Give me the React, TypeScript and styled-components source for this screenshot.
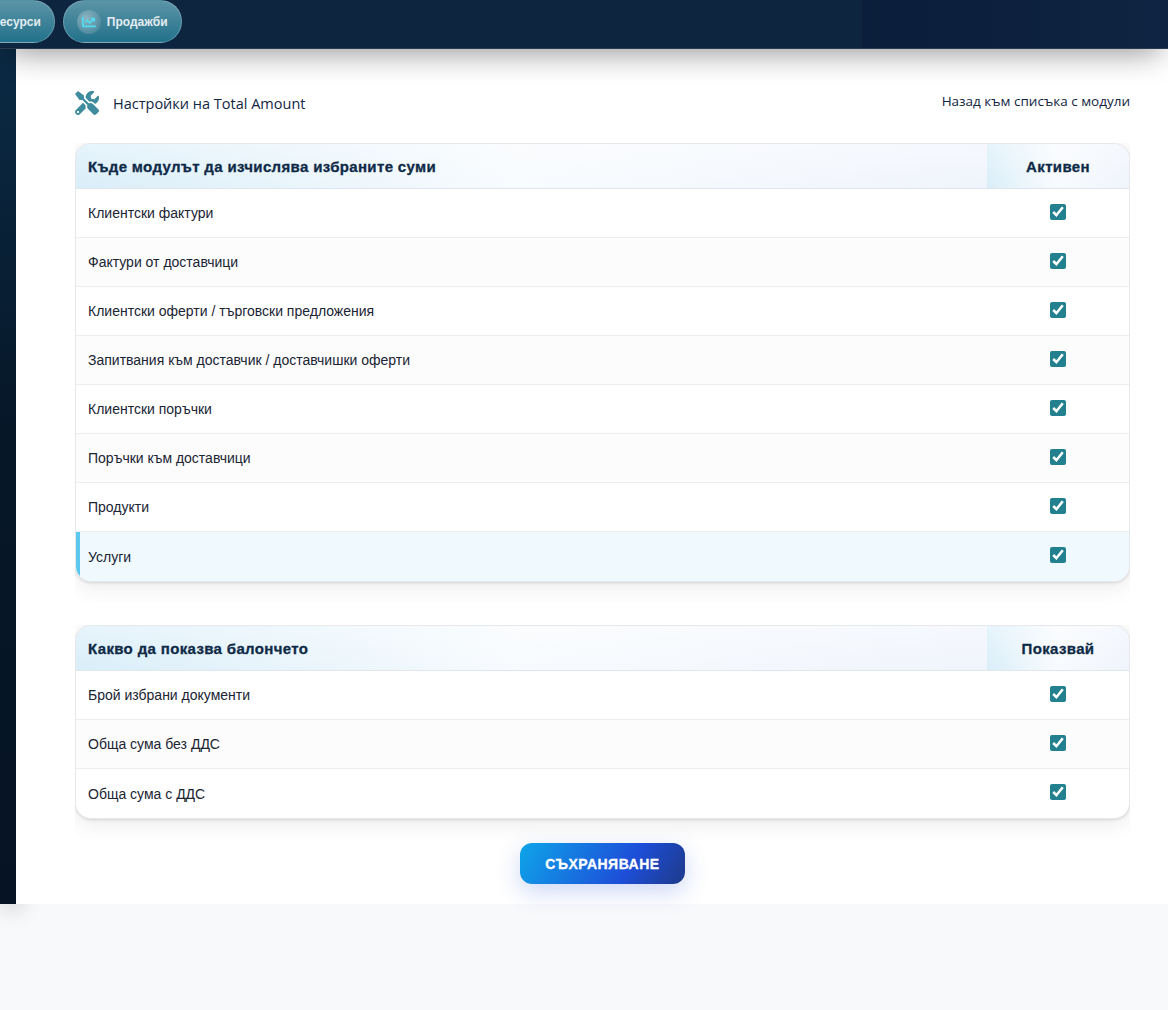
import styled, { createGlobalStyle } from "styled-components";
import { FaChartLine, FaTools, FaBoxes } from "react-icons/fa";

const GlobalStyle = createGlobalStyle`
  html, body {
    margin: 0;
    padding: 0;
    background: #f8f9fb;
    font-family: "Liberation Sans", Arial, sans-serif;
  }
  * { box-sizing: border-box; }
`;

const Page = styled.div`
  position: relative;
  width: 1168px;
  height: 1010px;
  overflow: hidden;
  background: #f8f9fb;
`;

const TopBar = styled.header`
  position: relative;
  z-index: 3;
  display: flex;
  height: 49px;
  background: #0e2540;
  border-bottom: 1px solid #2a3a4f;
  box-shadow: 0 12px 30px -8px rgba(0, 0, 0, 0.42);
`;

const Nav = styled.nav`
  flex: 1;
  display: flex;
  gap: 8px;
  margin-left: -52px;
  padding-top: 0;
  min-width: 0;
`;

const TopRight = styled.div`
  width: 306px;
  background: linear-gradient(90deg, #0b1e3a, #0e2442);
`;

const Pill = styled.a`
  display: flex;
  align-items: center;
  gap: 6px;
  height: 43px;
  padding: 0 13px;
  border-radius: 22px;
  border: 1px solid rgba(255, 255, 255, 0.22);
  background: linear-gradient(180deg, #5c94a7 0%, #3c8197 55%, #21728b 100%);
  color: #e3edf1;
  font-size: 12px;
  font-weight: 700;
  white-space: nowrap;
`;

const Ball = styled.span`
  display: flex;
  align-items: center;
  justify-content: center;
  width: 24px;
  height: 24px;
  border-radius: 50%;
  background: radial-gradient(circle at 40% 35%, #8fb4c2, #4d8a9e 75%);
  color: #4fdcf2;
  font-size: 14px;
`;

const Body = styled.div`
  display: flex;
  height: 855px;
`;

const Sidebar = styled.aside`
  position: relative;
  z-index: 1;
  width: 16px;
  background: linear-gradient(180deg, #0b2a44 0%, #061728 45%, #061324 100%);
  box-shadow: 4px 6px 22px rgba(0, 0, 0, 0.2);
`;

const Main = styled.main`
  position: relative;
  z-index: 2;
  flex: 1;
  background: #fff;
  padding: 41px 38px 0 59px;
`;

const TitleRow = styled.div`
  display: flex;
  align-items: center;
  justify-content: space-between;
  height: 26px;
  margin-bottom: 27px;
`;

const Title = styled.div`
  display: flex;
  align-items: center;
  gap: 14px;
  font-family: "Open Sans", sans-serif;
  font-size: 14.5px;
  color: #12263f;
  svg {
    color: #3f8c9e;
    font-size: 24px;
  }
`;

const BackLink = styled.a`
  position: relative;
  top: -2px;
  font-family: "Open Sans", sans-serif;
  font-size: 13.5px;
  color: #12263f;
`;

const TableClip = styled.div`
  overflow: hidden;
  padding-bottom: 21px;
  margin-bottom: 22px;
`;

const TableBox = styled.table`
  width: 100%;
  border-collapse: separate;
  border-spacing: 0;
  border: 1px solid #e6e8ec;
  border-radius: 16px;
  overflow: hidden;
  background: #fff;
  box-shadow: 0 4px 24px rgba(0, 0, 0, 0.09), 0 1px 3px rgba(0, 0, 0, 0.12);
`;

const HeadCell = styled.th<{ $center?: boolean }>`
  height: 45px;
  padding: 0 12px;
  text-align: ${(p) => (p.$center ? "center" : "left")};
  width: ${(p) => (p.$center ? "142px" : "auto")};
  font-size: 15px;
  font-weight: 700;
  letter-spacing: 0.35px;
  -webkit-text-stroke: 0.3px #0f2a47;
  color: #0f2a47;
  border-bottom: 1px solid #dfe6ee;
  background: linear-gradient(180deg, rgba(255, 255, 255, 0.35), rgba(255, 255, 255, 0)),
    linear-gradient(90deg, #d9eef9 0%, #f8fbfe 48%, #f0f4fc 100%);
`;

const Row = styled.tr<{ $active?: boolean }>`
  background: ${(p) => (p.$active ? "#f0f9fd" : "#fff")};
  &:nth-child(even) {
    background: ${(p) => (p.$active ? "#f0f9fd" : "#fcfcfc")};
  }
  &:not(:last-child) td {
    border-bottom: 1px solid #ededed;
  }
`;

const LabelCell = styled.td<{ $active?: boolean }>`
  height: 49px;
  padding: 0 12px;
  font-size: 14px;
  color: #1a2433;
  ${(p) => p.$active && "border-left: 4px solid #5bc8ef; padding-left: 8px;"}
`;

const CheckCell = styled.td`
  text-align: center;
  height: 49px;
`;

const Check = styled.input`
  display: block;
  width: 16px;
  height: 16px;
  margin: -3px auto 0;
  accent-color: #23818f;
`;

const SaveWrap = styled.div`
  display: flex;
  justify-content: center;
  margin-top: -19px;
`;

const SaveButton = styled.button`
  width: 165px;
  height: 41px;
  border: 0;
  border-radius: 12px;
  background: linear-gradient(120deg, #0ea5e9 0%, #1d4ed8 65%, #1e3a8a 100%);
  color: #fff;
  font-family: "Liberation Sans", Arial, sans-serif;
  font-size: 14px;
  font-weight: 700;
  letter-spacing: 0.5px;
  -webkit-text-stroke: 0.3px #fff;
  box-shadow: 0 8px 24px rgba(29, 78, 216, 0.22);
`;

const modules = [
  "Клиентски фактури",
  "Фактури от доставчици",
  "Клиентски оферти / търговски предложения",
  "Запитвания към доставчик / доставчишки оферти",
  "Клиентски поръчки",
  "Поръчки към доставчици",
  "Продукти",
  "Услуги",
];

const bubble = ["Брой избрани документи", "Обща сума без ДДС", "Обща сума с ДДС"];

const SettingsTable = ({
  title,
  column,
  rows,
  activeRow,
}: {
  title: string;
  column: string;
  rows: string[];
  activeRow?: string;
}) => (
  <TableClip>
    <TableBox>
      <thead>
        <tr>
          <HeadCell>{title}</HeadCell>
          <HeadCell $center>{column}</HeadCell>
        </tr>
      </thead>
      <tbody>
        {rows.map((row) => (
          <Row key={row} $active={row === activeRow}>
            <LabelCell $active={row === activeRow}>{row}</LabelCell>
            <CheckCell>
              <Check type="checkbox" defaultChecked />
            </CheckCell>
          </Row>
        ))}
      </tbody>
    </TableBox>
  </TableClip>
);

const App = () => {
  return (
    <Page>
      <GlobalStyle />
      <TopBar>
        <Nav>
          <Pill>
            <Ball>
              <FaBoxes />
            </Ball>
            Ресурси
          </Pill>
          <Pill>
            <Ball>
              <FaChartLine />
            </Ball>
            Продажби
          </Pill>
        </Nav>
        <TopRight />
      </TopBar>
      <Body>
        <Sidebar />
        <Main>
          <TitleRow>
            <Title>
              <FaTools />
              Настройки на Total Amount
            </Title>
            <BackLink>Назад към списъка с модули</BackLink>
          </TitleRow>
          <SettingsTable
            title="Къде модулът да изчислява избраните суми"
            column="Активен"
            rows={modules}
            activeRow="Услуги"
          />
          <SettingsTable title="Какво да показва балончето" column="Показвай" rows={bubble} />
          <SaveWrap>
            <SaveButton>СЪХРАНЯВАНЕ</SaveButton>
          </SaveWrap>
        </Main>
      </Body>
    </Page>
  );
};

export default App;
